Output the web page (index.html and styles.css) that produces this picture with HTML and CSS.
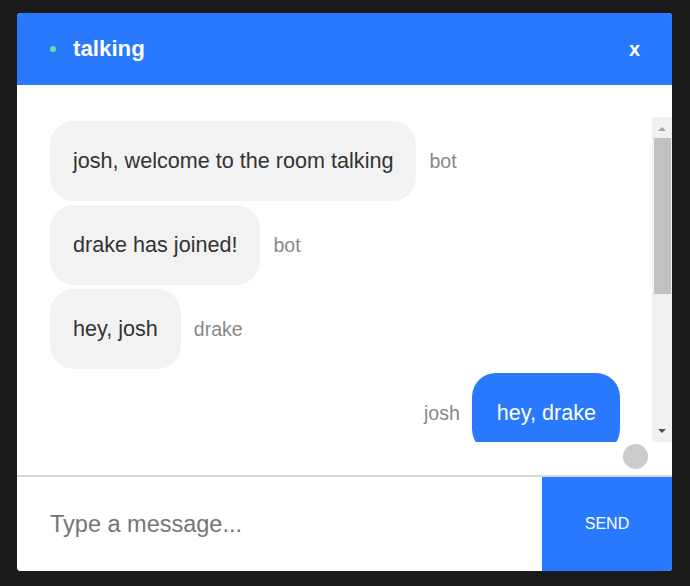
FILE: index.html
```html
<!DOCTYPE html>
<html lang="en">
<head>
<meta charset="utf-8">
<title>talking</title>
<link rel="stylesheet" href="styles.css">
</head>
<body>
<div class="card">
  <header class="header">
    <span class="dot"></span>
    <h1 class="title">talking</h1>
    <span class="close">x</span>
  </header>
  <div class="body">
    <div class="scroller">
      <div class="messages">
        <div class="msg"><div class="bubble">josh, welcome to the room talking</div><span class="author">bot</span></div>
        <div class="msg"><div class="bubble">drake has joined!</div><span class="author">bot</span></div>
        <div class="msg"><div class="bubble">hey, josh</div><span class="author">drake</span></div>
        <div class="msg mine"><span class="author">josh</span><div class="bubble">hey, drake</div></div>
        <div class="msg"><div class="bubble">how are you?</div><span class="author">drake</span></div>
        <div class="msg mine"><span class="author">josh</span><div class="bubble">good, you?</div></div>
        <div class="msg"><div class="bubble">all good</div><span class="author">drake</span></div>
      </div>
      <div class="scrollbar" aria-hidden="true">
        <div class="sb-btn">
          <svg width="20" height="20" viewBox="0 0 20 20"><polygon points="6,14 14,14 10,10" fill="#a3a3a3"/></svg>
        </div>
        <div class="sb-track"><div class="sb-thumb"></div></div>
        <div class="sb-btn">
          <svg width="20" height="20" viewBox="0 0 20 20"><polygon points="6,7 14,7 10,11" fill="#505050"/></svg>
        </div>
      </div>
    </div>
    <div class="typing"><span class="avatar"></span></div>
  </div>
  <form class="composer">
    <input class="input" type="text" placeholder="Type a message..." autofocus>
    <button class="send" type="button">SEND</button>
  </form>
</div>
</body>
</html>
```
FILE: styles.css
```css
html, body {
  margin: 0;
  padding: 0;
}
body {
  background: #1b1b1d;
  font-family: "Liberation Sans", Arial, sans-serif;
}
.card {
  width: 655px;
  height: 558px;
  margin: 13px 0 0 17px;
  background: #fff;
  border-radius: 4px;
  overflow: hidden;
  display: flex;
  flex-direction: column;
}
.header {
  height: 72px;
  flex: none;
  background: #2979ff;
  display: flex;
  align-items: center;
  padding: 0 32px 0 33px;
  color: #fff;
}
.dot {
  width: 6px;
  height: 6px;
  border-radius: 50%;
  background: #5ee3a1;
  margin-right: 17px;
}
.title {
  margin: 0;
  font-size: 22.3px;
  font-weight: bold;
  flex: 1;
}
.close {
  font-size: 20px;
  font-weight: bold;
  line-height: 1;
}
.body {
  flex: 1;
  display: flex;
  flex-direction: column;
  padding-top: 32px;
  min-height: 0;
}
.scroller {
  height: 325px;
  flex: none;
  display: flex;
}
.messages {
  flex: 1;
  overflow-y: auto;
  scrollbar-width: none;
  padding: 4px 32px 0 33px;
  box-sizing: border-box;
}
.scrollbar {
  width: 20px;
  flex: none;
  display: flex;
  flex-direction: column;
  background: #f1f1f1;
}
.sb-btn {
  height: 20px;
  flex: none;
}
.sb-btn svg {
  display: block;
}
.sb-track {
  flex: 1;
  padding: 1px 1px 0 2px;
}
.sb-thumb {
  height: 156px;
  background: #c1c1c1;
}
.msg {
  display: flex;
  align-items: center;
  gap: 13px;
  margin-bottom: 4px;
}
.msg.mine {
  justify-content: flex-end;
  gap: 12px;
}
.bubble {
  background: #f2f2f2;
  color: #333;
  border-radius: 24px;
  padding: 28px 23px;
  font-size: 21.6px;
  line-height: 24px;
  white-space: nowrap;
}
.mine .bubble {
  background: #2979ff;
  color: #fff;
  padding: 28px 24px 28px 25px;
}
.author {
  color: #888;
  font-size: 19.5px;
}
.typing {
  flex: 1;
  display: flex;
  justify-content: flex-end;
  align-items: flex-start;
  padding: 2px 24px 0 0;
}
.avatar {
  width: 25px;
  height: 25px;
  border-radius: 50%;
  background: #cccccc;
}
.composer {
  margin: 0;
  height: 94px;
  flex: none;
  border-top: 2px solid #d6d6d6;
  display: flex;
}
.input {
  flex: 1;
  border: none;
  outline: none;
  padding: 0 0 0 33px;
  font-family: "Liberation Sans", Arial, sans-serif;
  font-size: 23.5px;
  color: #333;
  background: #fff;
}
.input::placeholder {
  color: #757575;
}
.send {
  width: 130px;
  border: none;
  background: #2979ff;
  color: #fff;
  font-family: "Liberation Sans", Arial, sans-serif;
  font-size: 16px;
  padding: 0;
}
```
